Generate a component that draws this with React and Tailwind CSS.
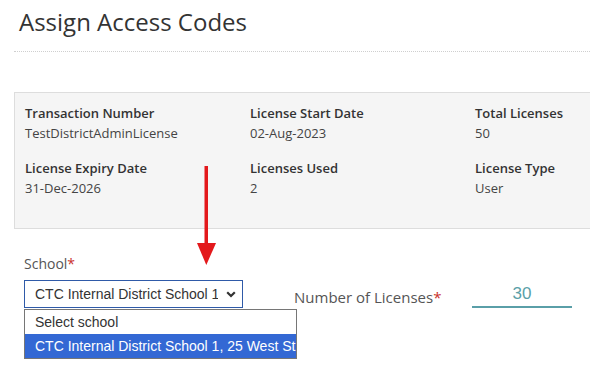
import React from "react";

const DETAILS = [
  { label: "Transaction Number", value: "TestDistrictAdminLicense" },
  { label: "License Start Date", value: "02-Aug-2023" },
  { label: "Total Licenses", value: "50" },
  { label: "License Expiry Date", value: "31-Dec-2026" },
  { label: "Licenses Used", value: "2" },
  { label: "License Type", value: "User" },
];

const Chevron = () => (
  <svg width="10" height="7" viewBox="0 0 10 7" className="shrink-0">
    <path d="M1.2 1.2 L5 5 L8.8 1.2" fill="none" stroke="#333" strokeWidth="2.2" />
  </svg>
);

const App = () => {
  return (
    <div className="relative w-[590px] h-[366px] overflow-hidden bg-white font-['Open_Sans',sans-serif] text-[#333]">
      <div className="pl-[14px]">
        {/* Header */}
        <div className="h-[52px] border-b border-dotted border-[#cfcfcf]">
          <h1 className="pl-[5px] pt-[5px] text-[24px] leading-[34px] font-normal text-[#333]">
            Assign Access Codes
          </h1>
        </div>

        {/* License details */}
        <div className="mt-[40px] w-[620px] h-[137px] bg-[#f5f5f5] border border-[#dddddd] pl-[10px] pt-[10px]">
          <div className="grid grid-cols-[225px_225px_225px] gap-y-[15px]">
            {DETAILS.map((item) => (
              <div key={item.label}>
                <div className="text-[13px] leading-[20px] font-semibold text-[#333]">{item.label}</div>
                <div className="text-[13px] leading-[20px] text-[#444]">{item.value}</div>
              </div>
            ))}
          </div>
        </div>

        {/* Form row */}
        <div className="flex items-start mt-[25px] pl-[10px]">
          <div className="w-[270px]">
            <label className="block text-[14px] leading-[20px] text-[#555]">
              School<span className="text-[#c9302c]">*</span>
            </label>
            <div className="relative mt-[6px]">
              <div className="w-[219px] h-[28px] border border-[#2f5aa8] bg-white flex items-center pl-[10px] pr-[6px] gap-[8px] font-['Liberation_Sans',Arial,sans-serif] text-[14px] text-[#333]">
                <span className="flex-1 min-w-0 overflow-hidden whitespace-nowrap">CTC Internal District School 1, 25 West St</span>
                <Chevron />
              </div>
              <div className="absolute left-0 top-[29px] w-[273px] border border-[#767676] bg-white font-['Liberation_Sans',Arial,sans-serif] text-[14px]">
                <div className="h-[24px] leading-[24px] pl-[10px] text-[#333]">Select school</div>
                <div className="h-[24px] leading-[24px] pl-[10px] bg-[#3368d4] text-white whitespace-nowrap">
                  CTC Internal District School 1, 25 West St
                </div>
              </div>
            </div>
          </div>

          <div className="flex items-start mt-[21px]">
            <label className="text-[15px] leading-[22px] text-[#555] w-[178px] pt-[11px]">
              Number of Licenses<span className="text-[#c9302c]">*</span>
            </label>
            <div className="w-[100px] h-[33px] border-b-2 border-[#5a9fa8] flex items-end justify-center pb-[4px] font-['Liberation_Sans',Arial,sans-serif] text-[17px] leading-[16px] text-[#5a9fa8]">
              30
            </div>
          </div>
        </div>
      </div>

      {/* Annotation arrow */}
      <svg className="absolute left-[195px] top-[166px]" width="24" height="100" viewBox="0 0 24 100">
        <rect x="9.5" y="0" width="3.5" height="80" fill="#e3191c" />
        <polygon points="2,77 21,77 11.3,99" fill="#e3191c" />
      </svg>
    </div>
  );
};

export default App;
